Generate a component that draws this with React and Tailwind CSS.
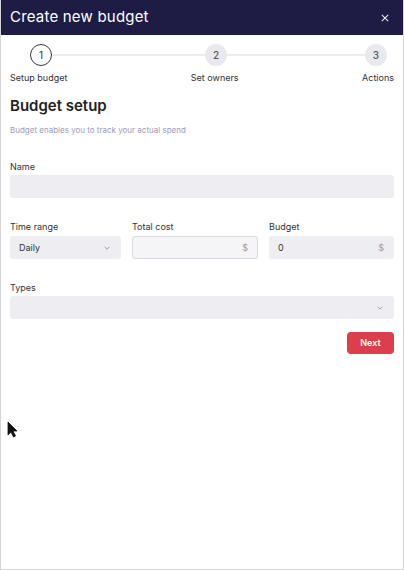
import React from "react";

const Chevron = () => (
  <svg width="8" height="8" viewBox="0 0 10 10" fill="none" stroke="#9a9aa6" strokeWidth="1.2">
    <path d="M2 3.5 L5 6.5 L8 3.5" />
  </svg>
);

export default function App() {
  return (
    <div className="w-[404px] h-[570px] bg-white flex flex-col border-l border-r border-b border-[#d4d4d8] relative overflow-hidden" style={{ fontFamily: "Inter, 'Open Sans', sans-serif" }}>
      <div className="h-[35px] bg-[#1e1c45] flex items-center justify-between pl-[9px] pr-[14px] shrink-0">
        <span className="text-white text-[15px] tracking-[0.2px]">Create new budget</span>
        <svg width="8" height="8" viewBox="0 0 10 10" stroke="#e8e8f0" strokeWidth="1.4">
          <path d="M1 1 L9 9 M9 1 L1 9" />
        </svg>
      </div>

      <div className="px-[9px] pt-[9px]">
        <div className="relative h-[22px] flex items-center pl-[20px]">
          <div className="absolute left-[40px] right-[18px] top-[10px] h-[2px] bg-[#ececf0]" />
          <div className="relative w-[22px] h-[22px] rounded-full border-[1.5px] border-[#3a3a3a] bg-white flex items-center justify-center text-[10px] text-[#333]">1</div>
          <div className="relative ml-[153px] w-[22px] h-[22px] rounded-full bg-[#e8e8ee] flex items-center justify-center text-[10px] text-[#555] font-medium">2</div>
          <div className="relative ml-[138px] w-[22px] h-[22px] rounded-full bg-[#e8e8ee] flex items-center justify-center text-[10px] text-[#555] font-medium">3</div>
        </div>
        <div className="flex justify-between mt-[6px] text-[9px] text-[#333] leading-[12px]">
          <span>Setup budget</span>
          <span>Set owners</span>
          <span>Actions</span>
        </div>

        <h1 className="mt-[12px] text-[15px] font-semibold text-[#222] leading-[20px]">Budget setup</h1>
        <p className="mt-[9px] text-[8px] text-[#9d9ab8] leading-[10px]">Budget enables you to track your actual spend</p>

        <div className="mt-[26px] text-[9px] text-[#333] leading-[12px]">Name</div>
        <div className="mt-[2px] h-[23px] rounded-[3px] bg-[#eeeef2]" />

        <div className="mt-[23px] flex gap-[11px]">
          <div className="w-[111px]">
            <div className="text-[9px] text-[#333] leading-[12px]">Time range</div>
            <div className="mt-[3px] h-[23px] rounded-[3px] bg-[#eeeef2] flex items-center justify-between pl-[9px] pr-[10px]">
              <span className="text-[9px] text-[#333]">Daily</span>
              <Chevron />
            </div>
          </div>
          <div className="w-[126px]">
            <div className="text-[9px] text-[#333] leading-[12px]">Total cost</div>
            <div className="mt-[3px] h-[23px] rounded-[3px] bg-[#f5f5f8] border border-[#d8d8de] flex items-center justify-end pr-[9px]">
              <span className="text-[9px] text-[#9a9aa6]">$</span>
            </div>
          </div>
          <div className="flex-1">
            <div className="text-[9px] text-[#333] leading-[12px]">Budget</div>
            <div className="mt-[3px] h-[23px] rounded-[3px] bg-[#eeeef2] flex items-center justify-between pl-[9px] pr-[10px]">
              <span className="text-[9px] text-[#333]">0</span>
              <span className="text-[9px] text-[#9a9aa6]">$</span>
            </div>
          </div>
        </div>

        <div className="mt-[23px] text-[9px] text-[#333] leading-[12px]">Types</div>
        <div className="mt-[2px] h-[23px] rounded-[3px] bg-[#eeeef2] flex items-center justify-end pr-[10px]">
          <Chevron />
        </div>

        <div className="mt-[13px] flex justify-end">
          <button className="w-[47px] h-[22px] rounded-[4px] bg-[#dc3e4b] text-white text-[9px] font-semibold">Next</button>
        </div>
      </div>

      <svg className="absolute left-[6px] top-[421px]" width="11" height="17" viewBox="0 0 11 17">
        <path d="M1 1 L1 14 L4 11 L6.5 16 L8.5 15 L6 10 L10 10 Z" fill="#111" stroke="#111" strokeWidth="0.8" strokeLinejoin="round" />
      </svg>
    </div>
  );
}
